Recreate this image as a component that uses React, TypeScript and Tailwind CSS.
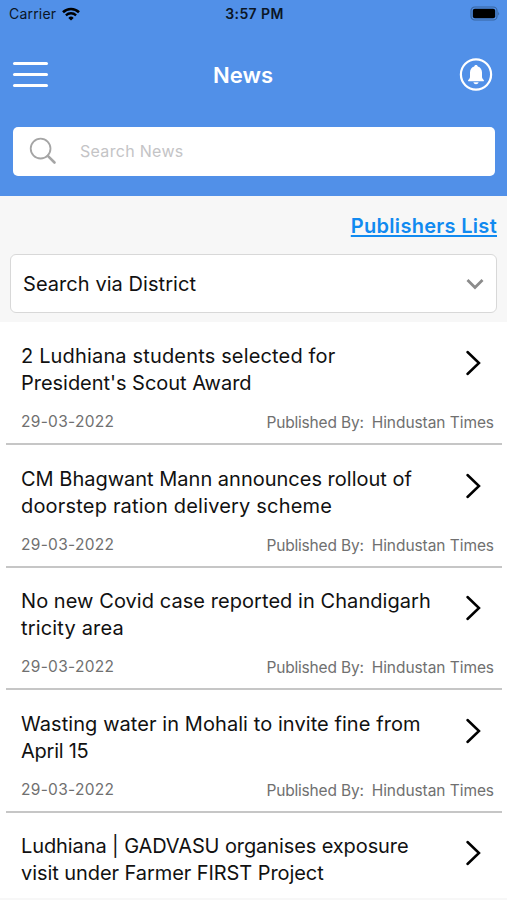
interface Article {
  lines: { text: string; tracking: string }[];
  date?: string;
  publisher?: string;
}

const ARTICLES: Article[] = [
  {
    lines: [
      { text: '2 Ludhiana students selected for', tracking: 'tracking-[0.16px]' },
      { text: "President's Scout Award", tracking: 'tracking-[-0.03px]' }
    ],
    date: '29-03-2022',
    publisher: 'Hindustan Times'
  },
  {
    lines: [
      { text: 'CM Bhagwant Mann announces rollout of', tracking: 'tracking-normal' },
      { text: 'doorstep ration delivery scheme', tracking: 'tracking-[0.19px]' }
    ],
    date: '29-03-2022',
    publisher: 'Hindustan Times'
  },
  {
    lines: [
      { text: 'No new Covid case reported in Chandigarh', tracking: 'tracking-[0.06px]' },
      { text: 'tricity area', tracking: 'tracking-[0.17px]' }
    ],
    date: '29-03-2022',
    publisher: 'Hindustan Times'
  },
  {
    lines: [
      { text: 'Wasting water in Mohali to invite fine from', tracking: 'tracking-[0.07px]' },
      { text: 'April 15', tracking: 'tracking-[-0.25px]' }
    ],
    date: '29-03-2022',
    publisher: 'Hindustan Times'
  },
  {
    lines: [
      { text: 'Ludhiana | GADVASU organises exposure', tracking: 'tracking-[-0.1px]' },
      { text: 'visit under Farmer FIRST Project', tracking: 'tracking-[-0.07px]' }
    ]
  }
];

export default function App() {
  return (
    <div className="flex h-[900px] w-[507px] flex-col overflow-hidden bg-white font-['Inter',sans-serif] text-[#111]">
      <header className="h-[196px] shrink-0 bg-[#5190e8]">
        <StatusBar />
        <NavBar />
        <SearchBar />
      </header>
      <DistrictFilter />
      <main className="flex-1 pt-[0.5px] pr-[5px] pl-1.5">
        {ARTICLES.map((article) => (
          <ArticleRow key={article.lines[0].text} article={article} />
        ))}
      </main>
      <div className="h-0.5 shrink-0 bg-[#f7f7f7]" />
    </div>
  );
}

function StatusBar() {
  return (
    <div className="grid h-7 grid-cols-3 items-center pr-[7px] pb-px pl-[9px] text-[#0b1626]">
      <div className="flex items-center gap-[6px]">
        <span className="text-[14px] tracking-[0.2px]">Carrier</span>
        <WifiIcon />
      </div>
      <span className="text-center text-[14px] font-semibold tracking-[0.4px] whitespace-nowrap">
        3:57 PM
      </span>
      <div className="flex justify-end">
        <BatteryIcon />
      </div>
    </div>
  );
}

function NavBar() {
  return (
    <div className="grid h-[98px] grid-cols-[35px_1fr_34px] items-center pr-[14px] pb-[5px] pl-[13px]">
      <button type="button" aria-label="Menu" className="flex w-[35px] flex-col gap-2">
        <span className="h-[3px] rounded-full bg-white" />
        <span className="h-[3px] rounded-full bg-white" />
        <span className="h-[3px] rounded-full bg-white" />
      </button>
      <h1 className="pt-[2px] pr-[21px] text-center text-[22px] font-semibold text-white">News</h1>
      <button type="button" aria-label="Notifications">
        <BellIcon />
      </button>
    </div>
  );
}

function SearchBar() {
  return (
    <div className="mr-[12px] ml-[13px] mt-[0.5px] flex h-[49px] items-center rounded-[5px] bg-white pl-[16px]">
      <SearchIcon />
      <span className="ml-[23px] text-[16px] tracking-[0.3px] text-[#c4c4c6]">Search News</span>
    </div>
  );
}

function DistrictFilter() {
  return (
    <section className="h-[126px] shrink-0 bg-[#f7f7f7] px-[10px]">
      <div className="flex h-[58px] items-center justify-end pt-px">
        <a className="text-[20px] font-semibold tracking-[0.3px] text-[#118af0] underline decoration-2 underline-offset-[2px]">
          Publishers List
        </a>
      </div>
      <div className="flex h-[59px] items-center justify-between rounded-[6px] border border-[#d8d8d8] bg-white pr-[12px] pl-[12px]">
        <span className="text-[20px] tracking-[0.06px]">Search via District</span>
        <svg width="18" height="12" viewBox="0 0 18 12" fill="none" aria-hidden="true">
          <path d="M1.500 2 9 9.500 16.500 2" stroke="#8b8b8b" strokeWidth="2.800" />
        </svg>
      </div>
    </section>
  );
}

function ArticleRow({ article }: { article: Article }) {
  return (
    <article className="flex h-[122.5px] flex-col border-b-2 border-[#c6c6c6] pt-[20.5px] pr-[8px] pl-[15px] last:h-auto last:border-b-0">
      <div className="flex justify-between">
        <h2 className="text-[20px] leading-[27px] whitespace-nowrap">
          {article.lines.map((line) => (
            <span key={line.text} className={`block ${line.tracking}`}>
              {line.text}
            </span>
          ))}
        </h2>
        <svg className="mt-[6px] mr-[12px]" width="18" height="28" viewBox="0 0 18 28" fill="none" aria-hidden="true">
          <path d="M3.500 3 15 14 3.500 25" stroke="#000" strokeWidth="2.500" strokeLinecap="round" />
        </svg>
      </div>
      {article.date ? (
        <div className="mt-[13px] flex items-center justify-between text-[15.500px] leading-[22px] text-[#707070]">
          <span className="tracking-[0.3px]">{article.date}</span>
          <span className="flex gap-2 pt-[2px]">
            <span className="tracking-[-0.18px]">Published By:</span>
            <span className="tracking-[-0.06px]">{article.publisher}</span>
          </span>
        </div>
      ) : null}
    </article>
  );
}

function WifiIcon() {
  return (
    <svg width="18" height="14" viewBox="0 0 18 14" fill="none" stroke="#000" aria-hidden="true">
      <path d="M1 5.200a11.500 11.500 0 0 1 16 0" strokeWidth="2.600" />
      <path d="M3.900 8.300a7.400 7.400 0 0 1 10.200 0" strokeWidth="2.300" />
      <path d="M9 13.600 6.300 10.900a3.900 3.900 0 0 1 5.400 0z" fill="#000" stroke="none" />
    </svg>
  );
}

function BatteryIcon() {
  return (
    <svg width="30" height="15" viewBox="0 0 30 15" aria-hidden="true">
      <rect x="1" y="1" width="26" height="13" rx="3.800" fill="none" stroke="#39659f" strokeWidth="1.200" />
      <rect x="2.800" y="2.800" width="22.400" height="9.400" rx="2" fill="#000" />
      <path d="M28.200 5.500q1.800 2 0 4z" fill="#39659f" />
    </svg>
  );
}

function BellIcon() {
  return (
    <svg width="34" height="34" viewBox="0 0 34 34" aria-hidden="true">
      <circle cx="17" cy="16.500" r="15.100" fill="none" stroke="#fff" strokeWidth="2.200" />
      <path
        d="M17 7c-1 0-1.700.6-1.800 1.500-2.700.8-4.200 3-4.200 6v4.200c0 1.400-.8 2.300-1.700 3.200-.5.600-.2 1.300.6 1.300h14.200c.8 0 1.100-.7.600-1.300-.9-.9-1.700-1.800-1.700-3.200v-4.200c0-3-1.500-5.200-4.200-6-.1-.9-.8-1.500-1.800-1.500z"
        fill="#fff"
      />
      <path d="M14.400 24.300h5.200c-.3 1.200-1.300 1.900-2.600 1.900s-2.300-.7-2.600-1.900z" fill="#fff" />
    </svg>
  );
}

function SearchIcon() {
  return (
    <svg width="28" height="28" viewBox="0 0 28 28" fill="none" stroke="#a5a5a5" aria-hidden="true">
      <circle cx="11.600" cy="11.600" r="9.900" strokeWidth="1.800" />
      <path d="m18.800 18.800 6.700 6.700" strokeWidth="2.600" strokeLinecap="round" />
    </svg>
  );
}
